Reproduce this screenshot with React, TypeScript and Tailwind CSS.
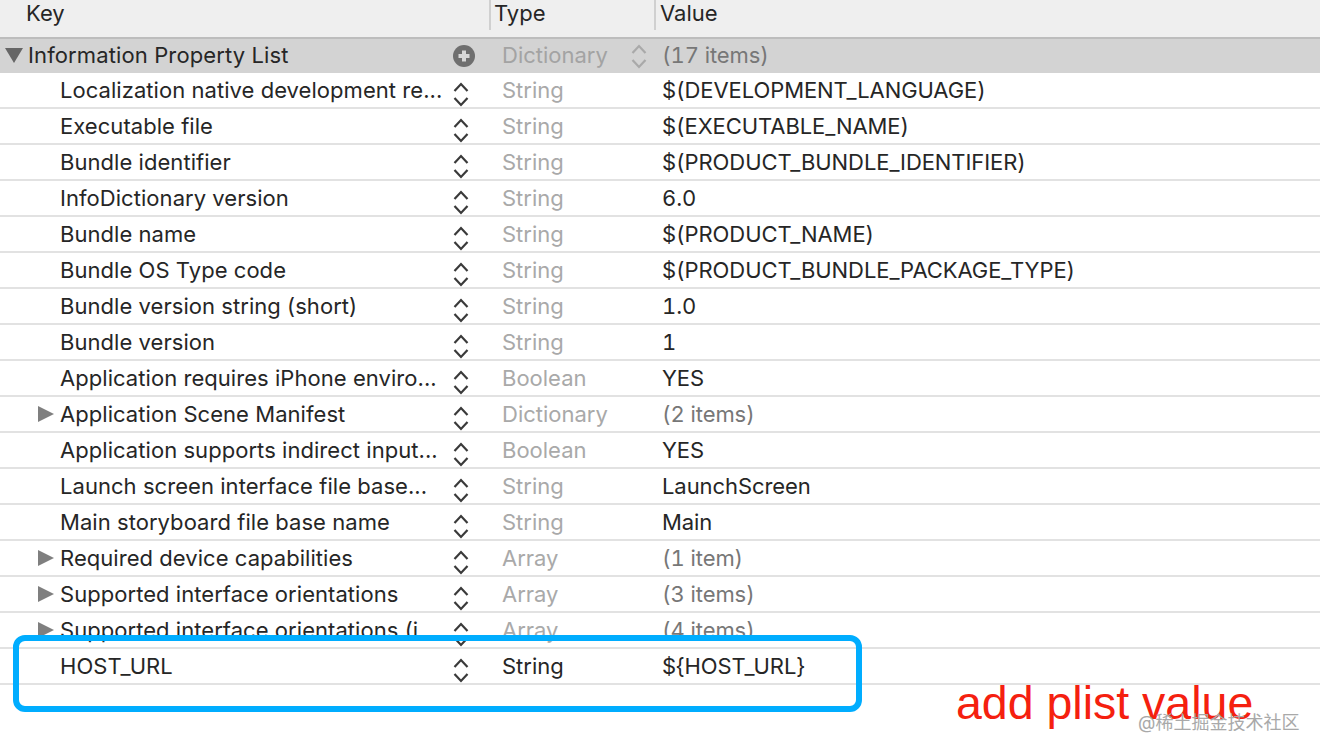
import React from 'react';

type Row = { key: string; type: string; value: string; arrow?: boolean; dark?: boolean };

const rows: Row[] = [
    { key: 'Localization native development re...', type: 'String', value: '$(DEVELOPMENT_LANGUAGE)' },
    { key: 'Executable file', type: 'String', value: '$(EXECUTABLE_NAME)' },
    { key: 'Bundle identifier', type: 'String', value: '$(PRODUCT_BUNDLE_IDENTIFIER)' },
    { key: 'InfoDictionary version', type: 'String', value: '6.0' },
    { key: 'Bundle name', type: 'String', value: '$(PRODUCT_NAME)' },
    { key: 'Bundle OS Type code', type: 'String', value: '$(PRODUCT_BUNDLE_PACKAGE_TYPE)' },
    { key: 'Bundle version string (short)', type: 'String', value: '1.0' },
    { key: 'Bundle version', type: 'String', value: '1' },
    { key: 'Application requires iPhone enviro...', type: 'Boolean', value: 'YES' },
    { key: 'Application Scene Manifest', type: 'Dictionary', value: '(2 items)', arrow: true },
    { key: 'Application supports indirect input...', type: 'Boolean', value: 'YES' },
    { key: 'Launch screen interface file base...', type: 'String', value: 'LaunchScreen' },
    { key: 'Main storyboard file base name', type: 'String', value: 'Main' },
    { key: 'Required device capabilities', type: 'Array', value: '(1 item)', arrow: true },
    { key: 'Supported interface orientations', type: 'Array', value: '(3 items)', arrow: true },
    { key: 'Supported interface orientations (i...', type: 'Array', value: '(4 items)', arrow: true },
    { key: 'HOST_URL', type: 'String', value: '${HOST_URL}', dark: true },
];

const Stepper = ({ color = '#3a3a3a' }: { color?: string }) => (
    <svg width="16" height="25" viewBox="0 0 16 25" fill="none" stroke={color} strokeWidth="2.2" className="shrink-0">
        <path d="M1.5 9 L8 2 L14.5 9" />
        <path d="M1.5 16 L8 23 L14.5 16" />
    </svg>
);

const PlistRow = ({ row }: { row: Row }) => (
    <div className="flex h-9 border-b-2 border-[#e2e2e2] bg-white text-[22px] leading-[34px]">
        <div className="relative flex w-[490px] items-center pl-[60px] text-[#262626]">
            {row.arrow && (
                <svg width="16" height="16" viewBox="0 0 16 16" className="absolute left-[38px] top-[9px]">
                    <path d="M0 0 L16 8 L0 16 Z" fill="#7f7f7f" />
                </svg>
            )}
            <span className="w-[384px] whitespace-nowrap tracking-[0.05px]">{row.key}</span>
            <div className="ml-[9px] mt-[9px]">
                <Stepper />
            </div>
        </div>
        <div className={`w-[172px] pl-3 ${row.dark ? 'text-[#262626]' : 'text-[#a9a9a9]'}`}>{row.type}</div>
        <div className={`tabular-nums tracking-[-0.08px] ${row.value.startsWith('(') ? 'text-[#777777]' : 'text-[#262626]'}`}>{row.value}</div>
    </div>
);

export default function App() {
    return (
        <div className="relative h-[754px] w-[1320px] overflow-hidden bg-white font-['Inter','Noto_Sans_CJK_SC',sans-serif]">
            <div className="flex h-[37px] bg-[#efefef] text-[22px] leading-[26px] text-[#262626]">
                <div className="w-[489px] pl-[26px]">Key</div>
                <div className="h-[30px] w-[165px] border-l-2 border-[#d0d0d0] pl-[3px]">Type</div>
                <div className="h-[30px] border-l-2 border-[#d0d0d0] pl-1">Value</div>
            </div>
            <div className="flex h-[36px] border-t-2 border-[#bdbdbd] bg-[#d3d3d3] text-[22px] leading-[32px]">
                <div className="relative flex w-[490px] items-center pl-[28px] text-[#262626]">
                    <svg width="18" height="15" viewBox="0 0 18 15" className="absolute left-[5px] top-[9px]">
                        <path d="M0 0 L18 0 L9 15 Z" fill="#666666" />
                    </svg>
                    <span className="w-[425px] pb-[2px] tracking-[0.12px]">Information Property List</span>
                    <svg width="22" height="22" viewBox="0 0 22 22" className="shrink-0">
                        <circle cx="11" cy="11" r="11" fill="#6f6f6f" />
                        <path d="M11 5.5 V16.5 M5.5 11 H16.5" stroke="#d8d8d8" strokeWidth="4" />
                    </svg>
                </div>
                <div className="flex w-[172px] items-center pl-3 text-[#a3a3a3]">
                    <span className="w-[129px] pb-[2px]">Dictionary</span>
                    <Stepper color="#a9a9a9" />
                </div>
                <div className="tabular-nums tracking-[-0.08px] text-[#777777]">(17 items)</div>
            </div>
            {rows.map((row) => (
                <PlistRow key={row.key + row.value} row={row} />
            ))}
            <div className="absolute left-[13px] top-[635px] h-[77px] w-[849px] rounded-[12px] border-[6px] border-[#00adff]" />
            <div className="absolute left-[956px] top-[673px] whitespace-nowrap font-['Liberation_Sans',sans-serif] text-[46.5px] leading-[60px] text-[#f5200f]">
                add plist value
            </div>
            <div className="absolute left-[1138px] top-[711px] whitespace-nowrap text-[18px] leading-[24px] text-[#a9a9a9]">
                @稀土掘金技术社区
            </div>
        </div>
    );
}
